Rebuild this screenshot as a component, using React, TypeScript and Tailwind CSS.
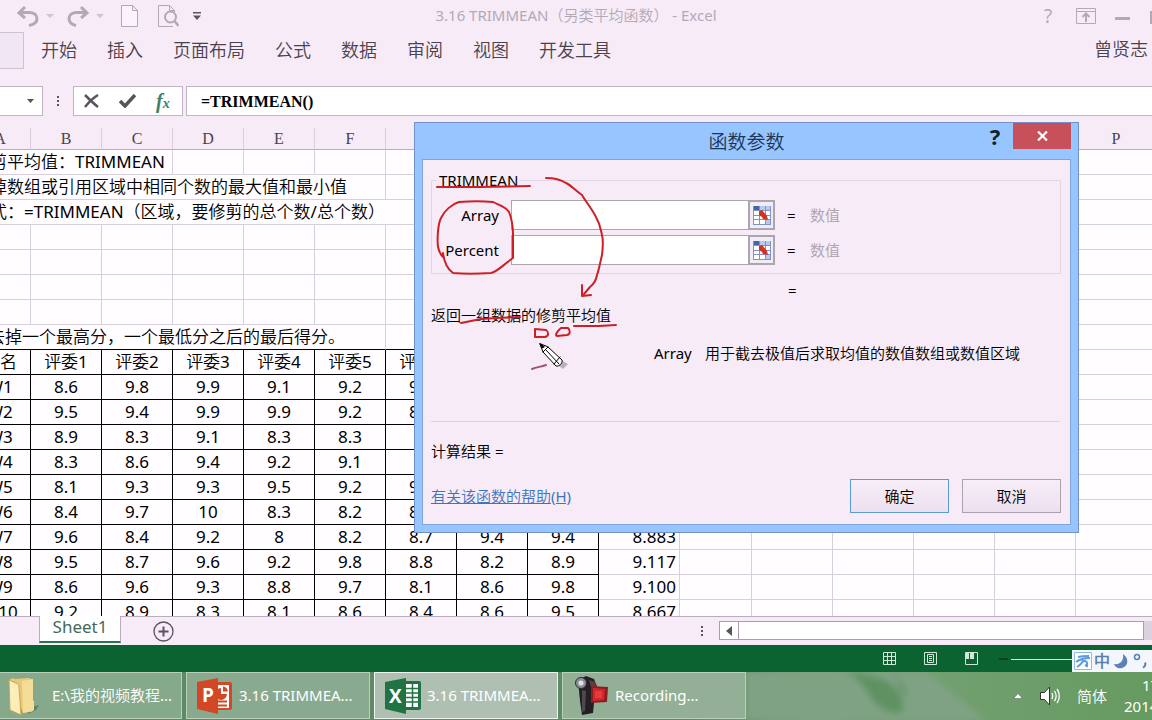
import type { ReactNode } from 'react';

const COLUMNS = [
  { id: 1, name: 'A', width: 'w-[61px]' },
  { id: 2, name: 'B', width: 'w-[71px]' },
  { id: 3, name: 'C', width: 'w-[71px]' },
  { id: 4, name: 'D', width: 'w-[71px]' },
  { id: 5, name: 'E', width: 'w-[71px]' },
  { id: 6, name: 'F', width: 'w-[71px]' },
  { id: 7, name: '', width: 'w-[71px]' },
  { id: 8, name: '', width: 'w-[71px]' },
  { id: 9, name: '', width: 'w-[71px]' },
  { id: 10, name: '', width: 'w-[81px]' },
  { id: 11, name: '', width: 'w-[72px]' },
  { id: 12, name: '', width: 'w-[81px]' },
  { id: 13, name: '', width: 'w-[81px]' },
  { id: 14, name: '', width: 'w-[81px]' },
  { id: 15, name: '', width: 'w-[81px]' },
  { id: 16, name: 'P', width: 'w-[81px]' },
];

const SCORES = [
  ['W1', '8.6', '9.8', '9.9', '9.1', '9.2', '9.1', '', '', ''],
  ['W2', '9.5', '9.4', '9.9', '9.9', '9.2', '8.5', '', '', ''],
  ['W3', '8.9', '8.3', '9.1', '8.3', '8.3', '9', '', '', ''],
  ['W4', '8.3', '8.6', '9.4', '9.2', '9.1', '9', '', '', ''],
  ['W5', '8.1', '9.3', '9.3', '9.5', '9.2', '9.4', '', '', ''],
  ['W6', '8.4', '9.7', '10', '8.3', '8.2', '8.6', '', '', ''],
  ['W7', '9.6', '8.4', '9.2', '8', '8.2', '8.7', '9.4', '9.4', '8.883'],
  ['W8', '9.5', '8.7', '9.6', '9.2', '9.8', '8.8', '8.2', '8.9', '9.117'],
  ['W9', '8.6', '9.6', '9.3', '8.8', '9.7', '8.1', '8.6', '9.8', '9.100'],
  ['W10', '9.2', '8.9', '8.3', '8.1', '8.6', '8.4', '8.6', '9.5', '8.667'],
];

const JUDGES = ['姓名', '评委1', '评委2', '评委3', '评委4', '评委5', '评委6', '', ''];

const TABS = ['开始', '插入', '页面布局', '公式', '数据', '审阅', '视图', '开发工具'];

const CELL = 'h-[25px] p-0 border-r border-b border-[#d9cfdc] leading-6 whitespace-nowrap';
const DARK_CELL = 'h-[25px] p-0 border-r border-b border-black leading-6 whitespace-nowrap text-center';

const EmptyCells = ({ count }: { count: number }) => (
  <>
    {Array.from({ length: count }, (_, i) => (
      <td key={i} className={CELL}></td>
    ))}
  </>
);

const TitleBar = () => (
  <header className="flex h-[31px] items-center text-[#b3a9b6]">
    <div className="flex w-[206px] shrink-0 items-center pl-4">
      <button aria-label="撤消" className="mr-1.5">
        <svg width="24" height="24" viewBox="0 0 24 24" fill="none" stroke="currentColor" strokeWidth="3">
          <path d="M9 3L3 9l6 5M3 8.5h10c5 0 8 2.500 8 6s-3 6-8 7" />
        </svg>
      </button>
      <svg width="8" height="4" viewBox="0 0 8 4" fill="#cfc5d2" className="mr-3">
        <path d="M0 0h8L4 4z" />
      </svg>
      <button aria-label="恢复" className="mr-1.5">
        <svg width="24" height="24" viewBox="0 0 24 24" fill="none" stroke="currentColor" strokeWidth="3">
          <path d="M15 3l6 6-6 5M21 8.500H11c-5 0-8 2.500-8 6s3 6 7 7" />
        </svg>
      </button>
      <svg width="8" height="4" viewBox="0 0 8 4" fill="#cfc5d2" className="mr-[17px]">
        <path d="M0 0h8L4 4z" />
      </svg>
      <button aria-label="新建" className="mr-5">
        <svg width="17" height="22" viewBox="0 0 17 22" fill="#fbf3fc" stroke="currentColor">
          <path d="M.5.5h11l5 5v16H.5zM11.500.5v5h5" />
        </svg>
      </button>
      <button aria-label="打印预览" className="mr-3.5">
        <svg width="21" height="22" viewBox="0 0 21 22" fill="none" stroke="currentColor">
          <path d="M15 21.500H.5V.5h11l5 5V7M11.500.5v5h5" />
          <circle cx="12.500" cy="12" r="5.500" strokeWidth="2" />
          <path d="M16.500 16l4 5" strokeWidth="2.500" />
        </svg>
      </button>
      <button aria-label="自定义快速访问工具栏" className="text-[#5c5260]">
        <svg width="8" height="8" viewBox="0 0 8 8" fill="currentColor">
          <path d="M0 0h8v1.500H0zM0 3.500h8L4 8z" />
        </svg>
      </button>
    </div>
    <h1 className="flex-1 text-center text-[15px]">3.16 TRIMMEAN（另类平均函数） - Excel</h1>
    <div className="flex w-[206px] shrink-0 items-center pl-[98px]">
      <button aria-label="帮助" className="mr-5 w-3 text-[19px] leading-6">
        ?
      </button>
      <button aria-label="功能区显示选项" className="mr-[19px] ml-1">
        <svg width="20" height="16" viewBox="0 0 20 16" fill="none" stroke="currentColor">
          <path d="M.5.5h19v15H.5zM.5 3.500h19" />
          <path d="M10 14V6M6.500 9L10 5.500 13.500 9" strokeWidth="2" />
        </svg>
      </button>
      <button aria-label="最小化" className="mr-5">
        <svg width="15" height="16" viewBox="0 0 15 16" fill="currentColor">
          <path d="M0 9h15v3H0z" />
        </svg>
      </button>
      <button aria-label="最大化" className="shrink-0">
        <svg width="15" height="16" viewBox="0 0 15 16" fill="none" stroke="currentColor" strokeWidth="2">
          <path d="M1 4h13v11H1z" />
        </svg>
      </button>
    </div>
  </header>
);

const Ribbon = () => (
  <nav className="flex h-[55px] items-start text-lg text-[#4a424d]">
    <button aria-label="文件" className="mt-px mr-[17px] h-[37px] w-6 shrink-0 border border-l-0 border-[#cfc3d2] bg-[#f1e6f3]"></button>
    <div className="flex flex-1 gap-[30px] pt-1">
      {TABS.map((tab) => (
        <button key={tab} className="h-[29px] shrink-0 leading-7">
          {tab}
        </button>
      ))}
    </div>
    <span className="shrink-0 pt-1 pr-1 leading-7">曾贤志</span>
  </nav>
);

const FormulaBar = () => (
  <div className="flex h-[42px] shrink-0 items-start">
    <button aria-label="名称框" className="flex h-[30px] w-[43px] items-center justify-end border border-l-0 border-[#c0b4c4] bg-white pr-2">
      <svg width="7" height="4" viewBox="0 0 7 4" fill="#555">
        <path d="M0 0h7L3.500 4z" />
      </svg>
    </button>
    <svg width="30" height="30" viewBox="0 0 30 30" fill="#5c5260">
      <path d="M14 10h2v2h-2zM14 14h2v2h-2zM14 18h2v2h-2z" />
    </svg>
    <div className="mr-[3px] flex h-[30px] w-[110px] items-center gap-5 border border-[#c0b4c4] bg-white pl-[10px]">
      <button aria-label="取消输入">
        <svg width="15" height="14" viewBox="0 0 15 14" fill="none" stroke="#5b525e" strokeWidth="2.500">
          <path d="M1 1c4 4 8 8 13 12M14 1C9 4 5 8 1 13" />
        </svg>
      </button>
      <button aria-label="输入">
        <svg width="17" height="14" viewBox="0 0 17 14" fill="none" stroke="#5b525e" strokeWidth="3.500">
          <path d="M1 7l5 5L16 1" />
        </svg>
      </button>
      <button aria-label="插入函数" className="font-['Liberation_Serif',serif] text-xl leading-6 font-bold text-[#3f7f68] italic">
        f<span className="text-sm">x</span>
      </button>
    </div>
    <input
      aria-label="编辑栏"
      defaultValue="=TRIMMEAN()"
      className="h-[30px] min-w-0 flex-1 border border-r-0 border-[#c0b4c4] bg-white pt-[2px] pl-[14px] font-['Liberation_Serif',serif] text-base font-bold text-black outline-none"
    />
  </div>
);

const Sheet = () => (
  <main className="min-h-0 flex-1 overflow-hidden">
    <table className="-ml-[30px] w-[1187px] table-fixed border-separate border-spacing-0 bg-[#fffdff] text-[17px] text-black">
      <colgroup>
        {COLUMNS.map((col) => (
          <col key={col.id} className={col.width} />
        ))}
      </colgroup>
      <thead>
        <tr>
          {COLUMNS.map((col) => (
            <th
              key={col.id}
              className="h-[22px] border-r border-b border-r-[#d9cfdc] border-b-[#b9adbd] bg-[#f7ebf8] p-0 font-['Liberation_Serif',serif] text-base leading-5 font-normal text-[#4a424d]"
            >
              {col.name}
            </th>
          ))}
        </tr>
      </thead>
      <tbody>
        <tr>
          <td colSpan={3} className={CELL + ' pl-[3px]'}>修剪平均值：TRIMMEAN</td>
          <EmptyCells count={13} />
        </tr>
        <tr>
          <td colSpan={6} className={CELL + ' pl-[3px]'}>去掉数组或引用区域中相同个数的最大值和最小值</td>
          <EmptyCells count={10} />
        </tr>
        <tr>
          <td colSpan={7} className={CELL + ' pl-[3px]'}>公式：=TRIMMEAN（区域，要修剪的总个数/总个数）</td>
          <EmptyCells count={9} />
        </tr>
        {[4, 5, 6, 7].map((row) => (
          <tr key={row}>
            <EmptyCells count={16} />
          </tr>
        ))}
        <tr>
          <td colSpan={6} className="h-[25px] border-r border-b border-r-[#d9cfdc] border-b-black p-0 pl-[18px] leading-6 whitespace-nowrap">
            去掉一个最高分，一个最低分之后的最后得分。
          </td>
          {[7, 8, 9].map((col) => (
            <td key={col} className="h-[25px] border-r border-b border-r-[#d9cfdc] border-b-black p-0"></td>
          ))}
          <EmptyCells count={7} />
        </tr>
        <tr>
          {JUDGES.map((judge, i) => (
            <td key={i} className={DARK_CELL}>
              {judge}
            </td>
          ))}
          <EmptyCells count={7} />
        </tr>
        {SCORES.map((row) => (
          <tr key={row[0]}>
            {row.slice(0, 9).map((value, i) => (
              <td key={i} className={DARK_CELL}>
                {value}
              </td>
            ))}
            <td className={CELL + ' pr-[3px] text-right'}>{row[9]}</td>
            <EmptyCells count={6} />
          </tr>
        ))}
      </tbody>
    </table>
  </main>
);

const SheetTabs = () => (
  <div className="flex h-[29px] shrink-0 items-start border-t border-[#b9adbd] bg-[#f7ebf8]">
    <button className="-mt-px ml-[39px] h-[27px] w-[82px] border-x border-b-2 border-x-[#b9adbd] border-b-[#2f6f52] bg-white pb-1 text-[17px] leading-5 text-[#44695a]">
      Sheet1
    </button>
    <button aria-label="新工作表" className="mt-1 ml-8">
      <svg width="21" height="21" viewBox="0 0 21 21" fill="none" stroke="#5c5260">
        <circle cx="10.500" cy="10.500" r="9.500" strokeWidth="1.300" />
        <path d="M10.500 5.500v10M5.500 10.500h10" strokeWidth="2" />
      </svg>
    </button>
    <svg width="4" height="12" viewBox="0 0 4 12" fill="#5c5260" className="mt-[9px] mr-[15px] ml-auto">
      <path d="M1 0h2v2H1zM1 4h2v2H1zM1 8h2v2H1z" />
    </svg>
    <div className="mt-1 flex h-[19px] w-[433px] bg-[#dcd1df]">
      <button aria-label="向左滚动" className="flex w-5 items-center justify-center border border-[#a99dad] bg-white">
        <svg width="6" height="10" viewBox="0 0 6 10" fill="#5c5260">
          <path d="M6 0v10L0 5z" />
        </svg>
      </button>
      <div className="w-[405px] border border-l-0 border-[#a99dad] bg-white"></div>
    </div>
  </div>
);

const StatusBar = () => (
  <div className="flex h-[27px] shrink-0 items-center justify-end bg-[#0b6332]">
    <div className="flex items-center gap-7 pb-px text-[#cfe9d8]">
      <button aria-label="普通">
        <svg width="13" height="13" viewBox="0 0 13 13" fill="none" stroke="currentColor">
          <path d="M.5.5h12v12H.5zM4.500.5v12M8.500.5v12M.5 4.500h12M.5 8.500h12" />
        </svg>
      </button>
      <button aria-label="页面布局视图">
        <svg width="13" height="13" viewBox="0 0 13 13" fill="none" stroke="currentColor">
          <path d="M.5.5h12v12H.5zM3.500 2.500h6v8h-6zM5 4.500h3M5 6.500h3M5 8.500h3" />
        </svg>
      </button>
      <button aria-label="分页预览">
        <svg width="13" height="13" viewBox="0 0 13 13" fill="none" stroke="currentColor">
          <path d="M.5.5h12v12H.5z" />
          <path d="M1 1h3v6H1zM5 1h4v6H5z" fill="currentColor" stroke="none" />
        </svg>
      </button>
    </div>
    <svg width="74" height="10" viewBox="0 0 74 10" className="ml-5">
      <path d="M1 4h9v2H1z" fill="#07421f" />
      <path d="M13 5h61v1H13z" fill="#d5ecdd" />
    </svg>
    <div className="mt-[5px] flex h-[22px] w-20 shrink-0 items-center overflow-hidden bg-[#f3f6fd] pl-[2px]">
      <svg width="18" height="18" viewBox="0 0 18 18" fill="none" stroke="#5b9bdc" className="shrink-0">
        <path d="M.5.5h17v17H.5z" stroke="#8fbbe6" fill="#fff" />
        <path d="M4 5c4-1 7-1 11-1M2 10c4-3 9-4 14-4M9 8c0 3-3 5-6 7M8 10c3-2 6-1 5 4l-2-1" strokeWidth="2" />
      </svg>
      <span className="mx-[2px] shrink-0 text-base leading-5 font-bold text-[#5b80ad]">中</span>
      <svg width="16" height="16" viewBox="0 0 16 16" fill="#5b80b5" className="mx-px shrink-0">
        <path d="M10 1c6 4 6 12-1 14-4 1-7-1-8-4 7 1 10-4 9-10z" />
      </svg>
      <svg width="18" height="18" viewBox="0 0 18 18" fill="none" stroke="#5b80ad" className="ml-[3px] shrink-0">
        <circle cx="4" cy="5" r="2.500" strokeWidth="1.500" />
        <path d="M12 10.500c1 2 0 4-2 5" strokeWidth="2" />
      </svg>
    </div>
  </div>
);

const FolderIcon = () => (
  <svg width="32" height="38" viewBox="0 0 32 38" className="shrink-0">
    <path d="M24 30l7-2-3 5-8 4z" fill="#5f7f63" />
    <path d="M1 3l4-2 2 1 14-1 4 2v31l-10 2z" fill="#e8c878" />
    <path d="M14 4l11-2v32l-10 2z" fill="#f5dd98" />
    <path d="M1 3l7 3c2 1 3 2 3 4l2 28L2 33z" fill="#fbeebb" stroke="#c9a552" />
    <path d="M23 22l3 2v9l-3 2z" fill="#f3dc95" />
  </svg>
);

const PowerPointIcon = () => (
  <svg width="36" height="36" viewBox="0 0 36 36" className="shrink-0">
    <path d="M18 4h15a2 2 0 012 2v24a2 2 0 01-2 2H18z" fill="#d24726" />
    <path d="M20 7h12v23H20z" fill="#fff" />
    <path d="M24 10v6h6a6 6 0 11-6-6z" fill="#d24726" />
    <path d="M26 8.500a6 6 0 015 5h-5z" fill="#d24726" />
    <path d="M21 22.500h9v2h-9zM21 26.500h9v2h-9z" fill="#d24726" />
    <path d="M0 4l21-4v36L0 31z" fill="#d24726" />
    <text x="5" y="24" fill="#fff" fontSize="19" fontWeight="bold" fontFamily="Open Sans, sans-serif">P</text>
  </svg>
);

const ExcelIcon = () => (
  <svg width="36" height="36" viewBox="0 0 36 36" className="shrink-0">
    <path d="M18 3h16a2 2 0 012 2v25a2 2 0 01-2 2H18z" fill="#217346" />
    <path d="M20 6h13v23H20z" fill="#fff" />
    <path d="M20 10.500h13M20 15h13M20 19.500h13M20 24h13M27.500 6v23" stroke="#217346" strokeWidth="1.500" />
    <path d="M0 4l21-4v36L0 31z" fill="#217346" />
    <text x="4" y="25" fill="#fff" fontSize="19" fontWeight="bold" fontFamily="Open Sans, sans-serif">X</text>
  </svg>
);

const CamcorderIcon = () => (
  <svg width="34" height="40" viewBox="0 0 34 40" className="shrink-0">
    <path d="M3 4l8-4 8 3 4 10-3 4-2 20-11 2-2-14z" fill="#231f22" />
    <path d="M7 14l4 1-1 20-3 1z" fill="#4f494e" />
    <path d="M14 4l6 2 2 8-5 1z" fill="#5a3f42" />
    <circle cx="6" cy="7" r="5.500" fill="#8d9196" stroke="#2c2a2d" />
    <circle cx="6" cy="7" r="2.500" fill="#dfe3e8" />
    <path d="M16 10l17 1-1 15-16 1z" fill="#8c1e22" />
    <path d="M18 12l12 1-1 11-11 1z" fill="#d3262b" />
    <path d="M20 15h7v7h-7z" fill="#e23c40" />
  </svg>
);

const TASK = 'flex h-[47px] shrink-0 items-center overflow-hidden border text-[15px] text-white whitespace-nowrap';

const TaskButton = ({ icon, label, className }: { icon: ReactNode; label: string; className: string }) => (
  <button className={TASK + ' ' + className}>
    {icon}
    <span>{label}</span>
  </button>
);

const Taskbar = () => (
  <footer className="relative h-12 shrink-0 overflow-hidden bg-linear-to-r from-[#5f8a66] from-60% via-[#7ba47c] via-70% to-[#659a60]">
    <svg className="absolute top-0 left-[746px] h-12 w-[406px] blur-[3px]" viewBox="0 0 406 48" preserveAspectRatio="none">
      <path d="M0 0h180l60 48H0z" fill="#7fa285" />
      <path d="M100 0c20 2 46 6 52 20 5 8 8 18 2 21-14 0-24-6-32-20-4-8-12-16-22-21z" fill="#5f9262" />
      <path d="M146 0c8 8 12 14 16 24l-6-4c-2-8-6-14-10-20z" fill="#5c8e5e" />
    </svg>
    <div className="relative flex h-12 items-start gap-1">
      <TaskButton className="w-[182px] gap-3 border-l-0 border-[#b9d0bb] bg-[#86a88b] pl-2" icon={<FolderIcon />} label="E:\我的视频教程..." />
      <TaskButton className="w-[184px] gap-1.5 border-[#b9d0bb] bg-[#8aaa90] pl-2.5" icon={<PowerPointIcon />} label="3.16 TRIMMEA..." />
      <TaskButton className="w-[184px] gap-1.5 border-[#eef4ee] bg-[#afc0b2] pl-2.5" icon={<ExcelIcon />} label="3.16 TRIMMEA..." />
      <TaskButton className="w-[184px] gap-1.5 border-[#b9d0bb] bg-[#93b096] pl-3" icon={<CamcorderIcon />} label="Recording..." />
      <div className="ml-auto flex h-12 shrink-0 items-center text-[15px] text-white">
        <button aria-label="显示隐藏的图标">
          <svg width="10" height="6" viewBox="0 0 10 6" fill="#fff" stroke="#4a5c4a" strokeWidth=".5">
            <path d="M5 .5L9.500 5.500H.5z" />
          </svg>
        </button>
        <button aria-label="音量" className="mr-[17px] ml-[17px]">
          <svg width="20" height="20" viewBox="0 0 20 20" fill="none" stroke="#fff">
            <path d="M.5 6.500h4L9.500 1v18l-5-5.500h-4z" fill="#fff" stroke="#333" />
            <path d="M12 7c1 2 1 4 0 6M14.500 5c2 3 2 7 0 10M17 3c3 4 3 10 0 14" strokeWidth="1.300" />
          </svg>
        </button>
        <span className="mr-[17px]">简体</span>
        <div className="w-7 leading-[21px] whitespace-nowrap">
          <div className="pl-[18px]">17</div>
          <div>2014</div>
        </div>
      </div>
    </div>
  </footer>
);

const RangeIcon = () => (
  <svg width="20" height="21" viewBox="0 0 20 21">
    <path d="M1 1h18v19H1z" fill="#fff" />
    <path d="M1 1h6v4H1z" fill="#3f66a8" />
    <path d="M7 1h12v4H7zM13 14h6v6h-6z" fill="#b9c9ee" />
    <path d="M1.500 1v19M7.500 1v19M13.500 1v19M18.500 1v19M1 5.500h18M1 10.500h18M1 14.500h18M1 19.500h18" stroke="#8093c6" fill="none" />
    <path d="M7 6l3-1 5 6 1 4-5-1-1-2-3-2z" fill="#d5311f" />
  </svg>
);

const ArgumentRow = ({ id, label }: { id: string; label: string }) => (
  <div className="flex h-[30px] items-center">
    <label htmlFor={id} className="w-[67px] text-right">
      {label}
    </label>
    <input id={id} className="ml-3 h-[30px] w-[238px] border border-[#aba5ae] bg-white px-1 outline-none" />
    <button aria-label={'选择区域 ' + label} className="-ml-px flex h-[30px] w-[27px] items-center justify-center border-2 border-[#aba5ae] bg-[#f3ecf7]">
      <RangeIcon />
    </button>
    <span className="ml-3 w-[23px]">=</span>
    <span className="text-[#aaa2ad]">数值</span>
  </div>
);

// red pen strokes drawn over the dialog during the lesson
const PenStrokes = () => (
  <svg className="pointer-events-none absolute -top-px -left-px" width="665" height="411" viewBox="414 122 665 411" fill="none" stroke="#cf1f26" strokeWidth="2" strokeLinecap="round" strokeLinejoin="round">
    <path d="M437 187h43l50-1" />
    <path d="M546 178c8 0 14 1 20 5 6 3 9 7 16 12 4 7 10 14 14 22 4 7 4 9 6 18 1 4 1 12 0 20-2 8-3 15-5 20-1 6-3 9-7 12l-6 7" />
    <path d="M582 285v11l9-1" />
    <path d="M493 202c-10-1-22-1-34 0-7 2-15 9-18 16-3 6-4 20-3 29 1 5 3 8 5 10M443 253c1 8 3 15 10 20 10 1 24 1 38 0 6-1 12-8 22-15 0-8 0-15 0-24 0-9-2-17-4-22-4-6-11-7-16-10" />
    <path d="M461 323l20-4 15-1 24-1" />
    <path d="M574 326h25l17-1" />
    <path d="M535 329v8h10c4-1 4-5 1-7zM561 328c-5 4-6 8-4 8l10-1c4-1 3-5 1-7z" />
    <path d="M532 369c5-2 8-2 14-4" stroke="#a5526f" />
    <path d="M548 358l15 11 5-5-15-8z" fill="#000" stroke="none" opacity=".25" />
    <g stroke="#000" strokeWidth="1" fill="#fff">
      <path d="M540 344l3 8 13 14c3 1 7-3 6-6l-14-13z" />
      <path d="M540 344l2 4 2-1z" fill="#000" />
      <path d="M543 352l5-5M546 350l13 14M554 364l6-7" />
    </g>
  </svg>
);

const FunctionDialog = () => (
  <section
    role="dialog"
    aria-labelledby="dialog-title"
    className="absolute top-[122px] left-[414px] w-[665px] border border-[#6f93c8] bg-[#97c5ff] text-[15px] text-black"
  >
    <div className="relative flex h-9 items-start">
      <h2 id="dialog-title" className="flex-1 pt-[5px] text-center text-[19px] leading-7 text-[#1d3557]">
        函数参数
      </h2>
      <div className="absolute top-0 right-[7px] flex items-start">
        <button aria-label="帮助" className="w-9 text-center text-[22px] leading-[26px] font-bold text-[#14202e]">
          ?
        </button>
        <button aria-label="关闭" className="flex h-[26px] w-[58px] items-center justify-center bg-[#c8505a]">
          <svg width="11" height="10" viewBox="0 0 11 10" stroke="#fff" strokeWidth="2.200">
            <path d="M1 .5l9 9M10 .5l-9 9" />
          </svg>
        </button>
      </div>
    </div>
    <div className="mx-[7px] mb-[7px] border border-[#7fa3dc] bg-[#f7ebf8] px-2 pt-[9px] pb-[11px]">
      <fieldset className="mr-px h-[105px] border border-[#e2d6e4] px-0">
        <legend className="ml-[5px] px-[2px] leading-[22px]">TRIMMEAN</legend>
        <div className="-mt-[3px] flex flex-col gap-[5px] pt-[12px]">
          <ArgumentRow id="array" label="Array" />
          <ArgumentRow id="percent" label="Percent" />
        </div>
      </fieldset>
      <div className="mt-1 pl-[357px] leading-6">=</div>
      <p className="leading-[26px]">返回一组数据的修剪平均值</p>
      <dl className="mt-3 flex pl-[223px] leading-[26px]">
        <dt className="w-[51px]">Array</dt>
        <dd>用于截去极值后求取均值的数值数组或数值区域</dd>
      </dl>
      <div className="mt-[55px] mr-[2px] border-t border-[#ddd0df]"></div>
      <p className="mt-[17px] leading-6">计算结果 =</p>
      <div className="mt-4 flex items-center">
        <a href="#help" className="text-[#3f74bd] underline">
          有关该函数的帮助(H)
        </a>
        <button className="ml-auto h-[34px] w-[99px] border border-[#5b9bd5] bg-linear-to-b from-[#f7eef8] to-[#ece0ee]">确定</button>
        <button className="mr-[1px] ml-[13px] h-[34px] w-[99px] border border-[#aaa2ad] bg-linear-to-b from-[#f7eef8] to-[#ece0ee]">取消</button>
      </div>
    </div>
    <PenStrokes />
  </section>
);

const App = () => {
  return (
    <div className="relative flex h-screen w-full flex-col overflow-hidden bg-[#f7ebf8] font-['Noto_Sans','Noto_Sans_CJK_SC_DemiLight','Noto_Sans_CJK_SC',sans-serif]">
      <TitleBar />
      <Ribbon />
      <FormulaBar />
      <Sheet />
      <SheetTabs />
      <StatusBar />
      <Taskbar />
      <FunctionDialog />
    </div>
  );
};

export default App;
